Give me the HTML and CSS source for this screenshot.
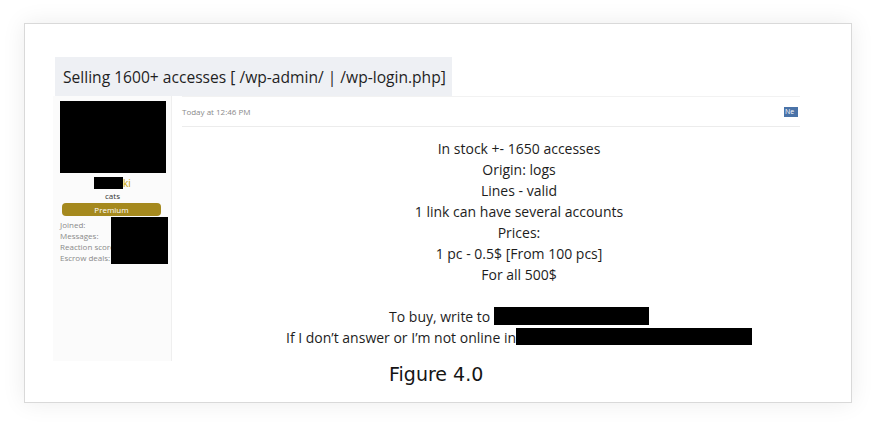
FILE: index.html
```html
<!DOCTYPE html>
<html lang="en">
<head>
  <meta charset="utf-8">
  <title>Figure 4.0</title>
  <link rel="stylesheet" href="styles.css">
</head>
<body>

  <div class="card">
    <div class="thread-title">Selling 1600+ accesses [ /wp-admin/ | /wp-login.php]</div>

    <div class="post">
      <div class="user">
        <div class="avatar"></div>
        <div class="name"><span class="redact name-box"></span>ki</div>
        <div class="usertitle">cats</div>
        <div class="banner">Premium</div>
        <div class="extra">
          <div class="labels">
            <div>Joined:</div>
            <div>Messages:</div>
            <div>Reaction score:</div>
            <div>Escrow deals:</div>
          </div>
          <div class="redact extra-box"></div>
        </div>
      </div>

      <div class="main">
        <div class="post-head">
          <span class="date">Today at 12:46 PM</span>
          <span class="new">Ne</span>
        </div>
        <div class="post-body">
          <div>In stock +- 1650 accesses</div>
          <div>Origin: logs</div>
          <div>Lines - valid</div>
          <div>1 link can have several accounts</div>
          <div>Prices:</div>
          <div>1 pc - 0.5$ [From 100 pcs]</div>
          <div>For all 500$</div>
          <div>&nbsp;</div>
          <div>To buy, write to <span class="redact box1"></span></div>
          <div>If I don’t answer or I’m not online in<span class="redact box2"></span></div>
        </div>
      </div>
    </div>

    <div class="caption">Figure 4.0</div>
  </div>

</body>
</html>
```

FILE: styles.css
```css
html, body {
    margin: 0;
    padding: 0;
}

body {
    background: #ffffff;
    font-family: "Open Sans", "Noto Sans", sans-serif;
    width: 880px;
    height: 432px;
    overflow: hidden;
}

.card {
    margin: 23px 0 0 24px;
    width: 828px;
    height: 380px;
    box-sizing: border-box;
    padding-top: 33px;
    border: 1px solid #d9d9d9;
    background: #fff;
    box-shadow: 0 0 22px rgba(0, 0, 0, 0.08);
}

.thread-title {
    margin-left: 30px;
    width: 397px;
    height: 39px;
    box-sizing: border-box;
    background: #eef0f4;
    padding: 9px 0 0 8px;
    font-size: 15.6px;
    color: #1f1f1f;
    white-space: nowrap;
}

.post {
    display: flex;
    margin-left: 28px;
}

.user {
    width: 119px;
    height: 265px;
    box-sizing: border-box;
    background: #fbfbfb;
    border-right: 1px solid #efefef;
    padding: 5px 6px 0 7px;
    font-size: 8px;
}

.avatar {
    width: 106px;
    height: 72px;
    background: #000;
}

.redact {
    display: inline-block;
    background: #000;
    vertical-align: top;
}

.name {
    margin-top: 4px;
    height: 12px;
    text-align: center;
    font-size: 10px;
    line-height: 12px;
    color: #c9a400;
}

.name-box {
    width: 29px;
    height: 12px;
}

.usertitle {
    text-align: center;
    font-size: 8px;
    line-height: 13px;
    color: #333;
}

.banner {
    margin: 1px 4px 0 2px;
    height: 13px;
    border-radius: 4px;
    background: #a5891e;
    color: #fff;
    font-size: 8px;
    line-height: 13px;
    text-align: center;
}

.extra {
    position: relative;
    margin-top: 1px;
}

.labels {
    padding-top: 2px;
    color: #8a8a8a;
    line-height: 11px;
    white-space: nowrap;
}

/* redaction box lies over the label column */
.extra-box {
    position: absolute;
    top: 0;
    right: -3px;
    width: 57px;
    height: 47px;
}

.main {
    width: 680px;
}

.post-head {
    width: 618px;
    height: 31px;
    box-sizing: border-box;
    margin-left: 10px;
    border-top: 1px solid #f2f2f2;
    border-bottom: 1px solid #ececec;
    display: flex;
    justify-content: space-between;
    align-items: center;
}

.date {
    font-size: 8px;
    color: #8a8a8a;
}

.new {
    margin-right: 2px;
    background: #4a73a8;
    color: #fff;
    font-size: 7px;
    line-height: 10px;
    width: 13px;
    overflow: hidden;
    padding-left: 1px;
}

.post-body {
    padding-top: 11px;
    margin-left: 15px;
    text-align: center;
    font-size: 14px;
    line-height: 21px;
    color: #1d1d1d;
}

.box1 {
    width: 155px;
    height: 18px;
    margin-top: 1px;
}

.box2 {
    width: 236px;
    height: 17px;
    margin-top: 1px;
}

.caption {
    margin: 2px 0 0 364px;
    font-family: "DejaVu Sans", sans-serif;
    font-size: 19px;
    color: #151515;
}
```
